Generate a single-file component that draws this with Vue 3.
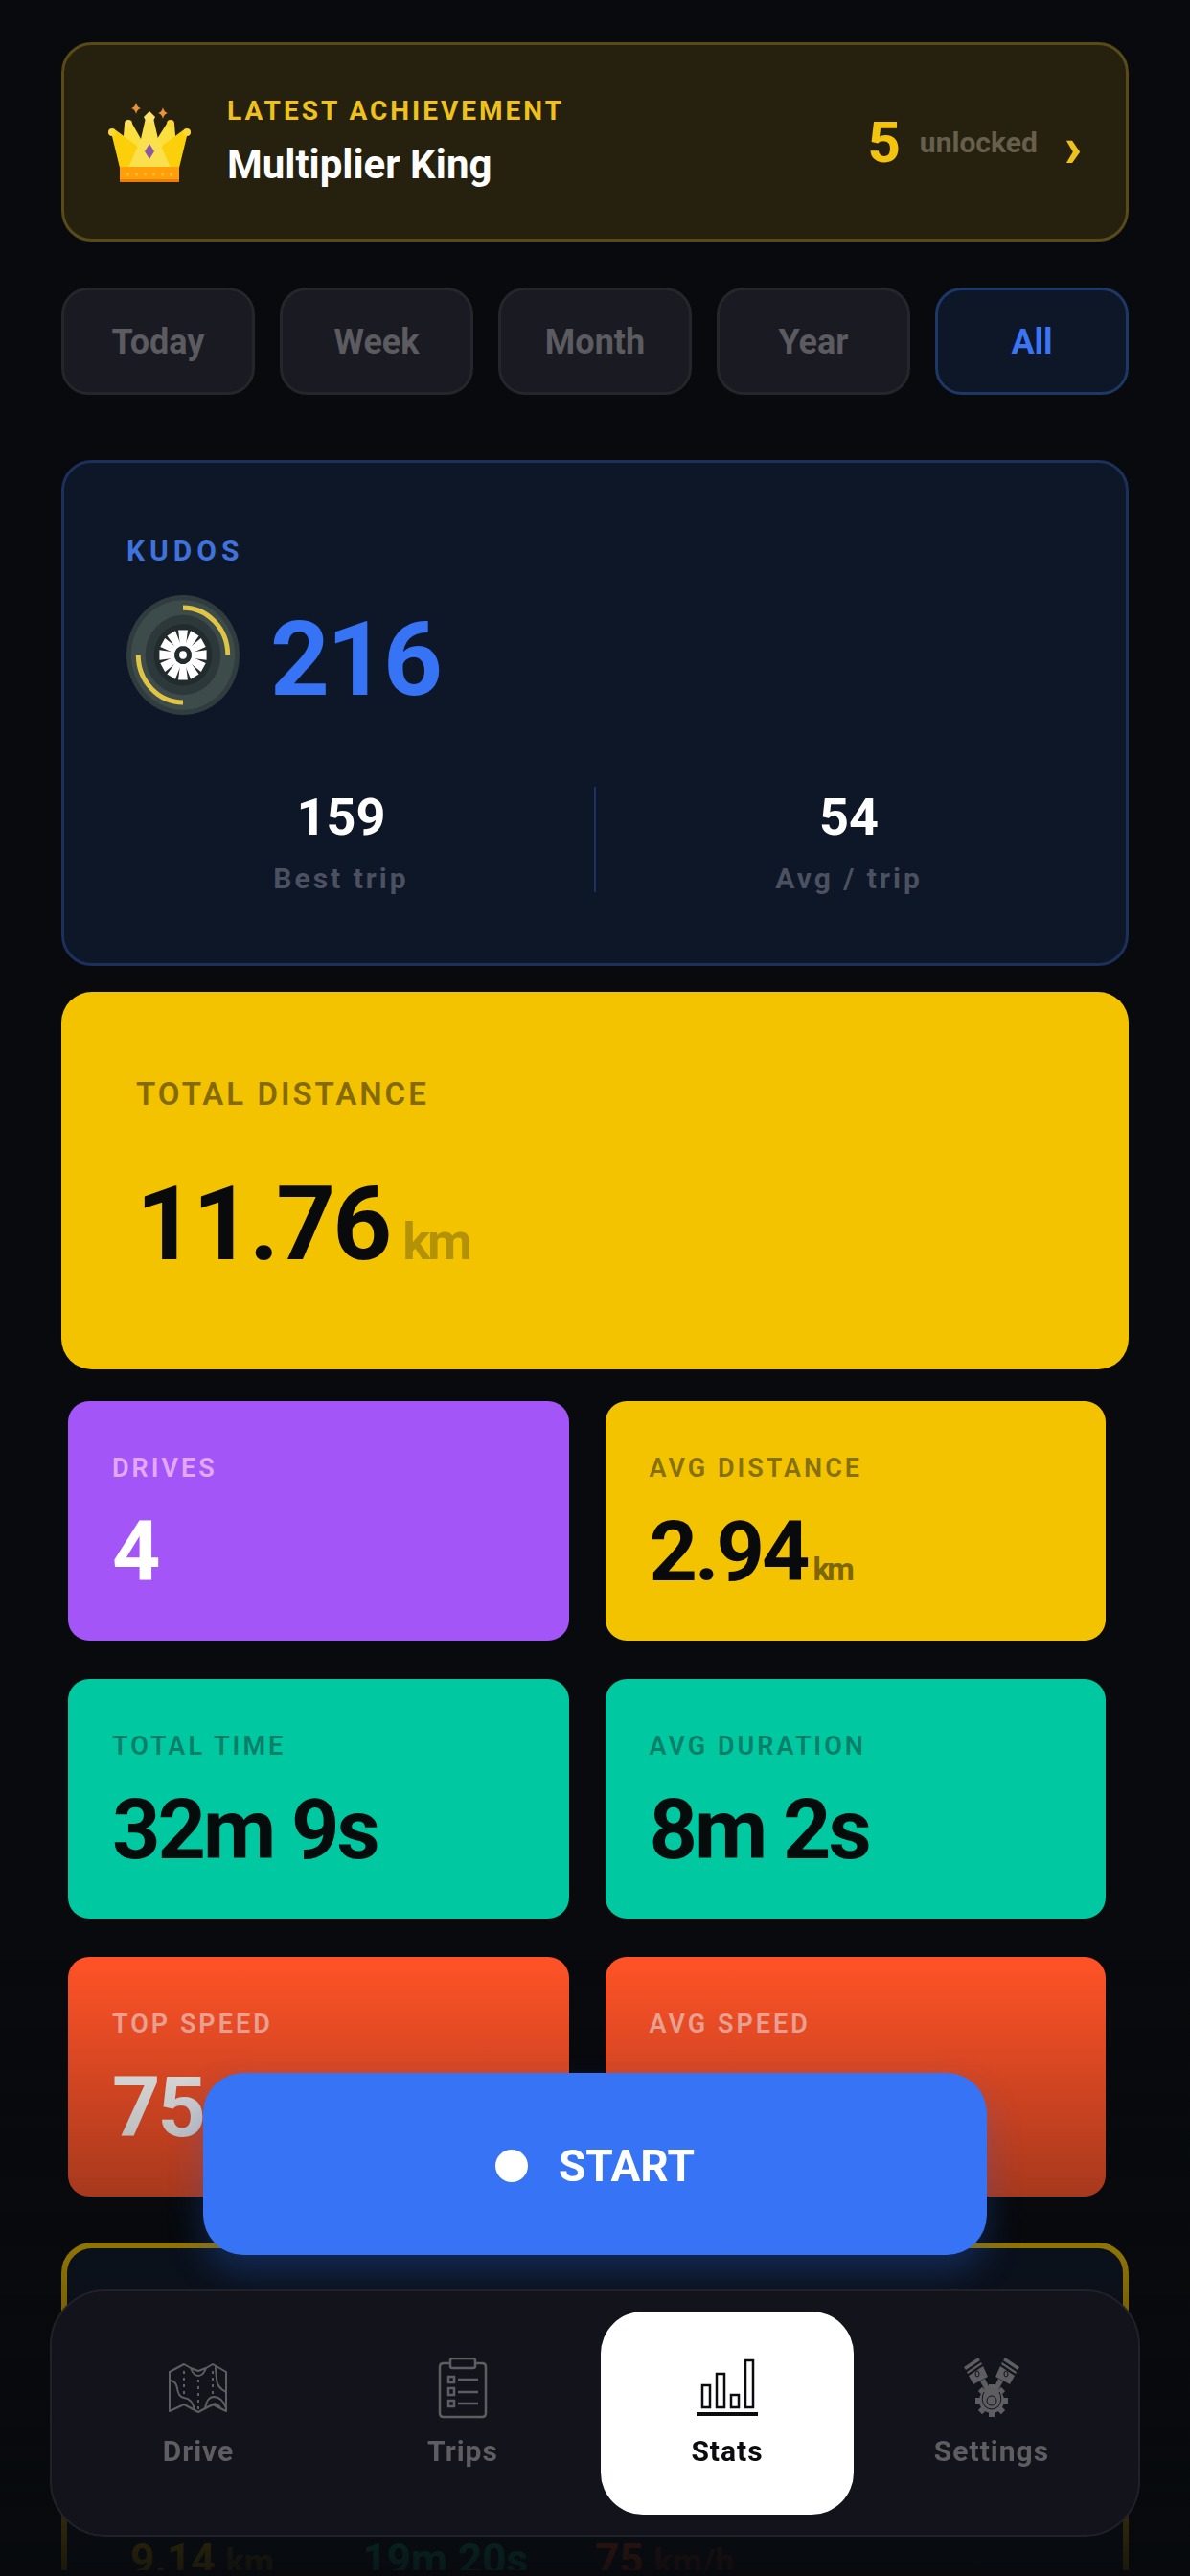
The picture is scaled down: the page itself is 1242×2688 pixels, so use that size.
<script setup>
import { ref } from 'vue'

const periods = ['Today', 'Week', 'Month', 'Year', 'All']
const period = ref('All')

const stats = [
  { label: 'DRIVES', value: '4', tone: 'purple' },
  { label: 'AVG DISTANCE', value: '2.94', unit: 'km', tone: 'yellow' },
  { label: 'TOTAL TIME', value: '32m 9s', tone: 'green' },
  { label: 'AVG DURATION', value: '8m 2s', tone: 'green' },
  { label: 'TOP SPEED', value: '75', tone: 'orange' },
  { label: 'AVG SPEED', value: '', tone: 'orange' },
]

const spokes = Array.from({ length: 12 }, (_, i) => i * 30)
const teeth = Array.from({ length: 8 }, (_, i) => i * 45)
</script>

<template>
  <div class="app">
    <main class="content">
      <a href="#achievements" class="achievement">
        <svg class="crown" viewBox="0 0 86 84" aria-hidden="true">
          <path d="M29 0q1 5 5 6q-4 1-5 6q-1-5-5-6q4-1 5-6zM57 5q1 5 5 6q-4 1-5 6q-1-5-5-6q4-1 5-6z" fill="#e8913a" />
          <path d="M17 22L25 22L34 38L51 38L61 22L69 22L72 60H14z" fill="#fbdf3c" />
          <path d="M3 31L8 29L27 43L43 58L59 43L78 29L83 31L74 68H12z" fill="#fccf0b" />
          <path d="M39 16H47L52 38L65 68H21L34 38z" fill="#fbe04e" />
          <circle cx="4" cy="31" r="4" fill="#fcd835" />
          <circle cx="82" cy="31" r="4" fill="#fcd835" />
          <circle cx="21" cy="22" r="4" fill="#fde05a" />
          <circle cx="65" cy="22" r="4" fill="#fcd835" />
          <path d="M43 9L49 15Q47 20 43 21Q39 20 37 15z" fill="#fde36a" />
          <path d="M43 43L48 51L43 59L38 51z" fill="#8a56a6" />
          <path d="M12 67H74V82H12z" fill="#ff9f0a" />
          <path d="M12 80H74V83H12z" fill="#ee7d06" />
          <path d="M19 75H70" stroke="#ffb92e" stroke-width="3" stroke-dasharray="3 6" />
        </svg>
        <span class="achievement-text">
          <span class="eyebrow">LATEST ACHIEVEMENT</span>
          <span class="achievement-name">Multiplier King</span>
        </span>
        <span class="count">5</span>
        <span class="unlocked">unlocked</span>
        <span class="chevron">›</span>
      </a>

      <div class="periods">
        <button
          v-for="p in periods"
          :key="p"
          type="button"
          class="period"
          :class="{ active: p === period }"
          :aria-pressed="p === period"
          @click="period = p"
        >{{ p }}</button>
      </div>

      <section class="kudos">
        <h2 class="kudos-label">KUDOS</h2>
        <div class="kudos-row">
          <svg class="wheel" viewBox="0 0 120 120" preserveAspectRatio="none" aria-hidden="true">
            <circle cx="60" cy="60" r="60" fill="#303c3d" />
            <circle cx="60" cy="60" r="55" fill="#3d4b4b" />
            <circle cx="60" cy="60" r="40" fill="#2c383a" />
            <circle cx="60" cy="60" r="31" fill="#222c2e" />
            <path d="M60 12.500A47.500 47.500 0 0 1 107.500 60M12.500 60A47.500 47.500 0 0 0 60 107.500" fill="none" stroke="#dfc445" stroke-width="5" />
            <path v-for="a in spokes" :key="a" d="M-5-25H5L3-9H-3z" fill="#fff" :transform="`translate(60 60) rotate(${a})`" />
            <circle cx="60" cy="60" r="8" fill="#222c2e" />
            <circle cx="60" cy="60" r="4" fill="#fff" />
          </svg>
          <span class="kudos-value">216</span>
        </div>
        <dl class="kudos-stats">
          <div class="kudos-stat">
            <dd>159</dd>
            <dt>Best trip</dt>
          </div>
          <div class="kudos-stat">
            <dd>54</dd>
            <dt>Avg / trip</dt>
          </div>
        </dl>
      </section>

      <section class="total">
        <h2 class="total-label">TOTAL DISTANCE</h2>
        <p class="total-value">11.76<span class="total-unit">km</span></p>
      </section>

      <section class="grid">
        <article v-for="s in stats" :key="s.label" class="stat" :class="s.tone">
          <h3 class="stat-label">{{ s.label }}</h3>
          <p class="stat-value">{{ s.value }}<span v-if="s.unit" class="stat-unit">{{ s.unit }}</span></p>
        </article>
      </section>

      <section class="best">
        <p class="best-item yellow-text">9.14 <span class="best-unit">km</span></p>
        <p class="best-item green-text">19m 20s</p>
        <p class="best-item orange-text">75 <span class="best-unit">km/h</span></p>
      </section>
    </main>

    <div class="fade"></div>

    <div class="dock">
      <button type="button" class="start"><span class="dot"></span>START</button>
      <nav class="nav">
        <a href="#drive" class="nav-item">
          <svg class="nav-icon" viewBox="0 0 64 64" fill="none" stroke="currentColor" stroke-width="2" stroke-linejoin="round" aria-hidden="true">
            <path d="M2 15L17 7L24 11Q27 19 32 19Q37 19 40 11L47 7L61 15V56L47 49L32 57L17 49L2 56z" />
            <path d="M24 11L32 14L40 11M3 24Q9 25 10 32Q11 41 17 42Q26 43 28 55M50 9Q50 13 51 22Q51 31 61 36M39 53Q41 41 48 41Q57 41 61 53M45 51Q49 45 55 52" />
            <path d="M17 14V40M32 23V54M47 14V40" stroke-dasharray="3 4" />
          </svg>
          <span>Drive</span>
        </a>
        <a href="#trips" class="nav-item">
          <svg class="nav-icon" viewBox="0 0 64 64" fill="none" stroke="currentColor" stroke-width="2.500" aria-hidden="true">
            <path d="M19 6H12Q8 6 8 10V58Q8 62 12 62H52Q56 62 56 58V10Q56 6 52 6H45" />
            <rect x="19" y="1" width="26" height="10" rx="2" />
            <path d="M17 20h6v6h-6zM17 32h6v7h-6zM17 45h6v6h-6z" />
            <path d="M27 23H48M27 36H48M27 48H48" />
          </svg>
          <span>Trips</span>
        </a>
        <a href="#stats" class="nav-item current" aria-current="page">
          <svg class="nav-icon" viewBox="0 0 64 64" fill="none" stroke="currentColor" stroke-width="2.500" aria-hidden="true">
            <path d="M6 29H14V52H6zM21 17H29V52H21zM36 39H44V52H36zM51 3H59V52H51z" />
            <path d="M0 59H64" stroke-width="4" />
          </svg>
          <span>Stats</span>
        </a>
        <a href="#settings" class="nav-item">
          <svg class="nav-icon" viewBox="0 0 64 64" aria-hidden="true">
            <g fill="currentColor">
              <path d="M3 10L18 0L20 3L5 13zM6 15L21 5L22 7L7 17zM8 19L23 9L28 20L13 28z" />
              <path d="M61 10L46 0L44 3L59 13zM58 15L43 5L42 7L57 17zM56 19L41 9L36 20L51 28z" />
              <path d="M20 25L25 22L32 36L28 39zM44 25L39 22L32 36L36 39z" />
              <circle cx="32" cy="31" r="3" />
              <path v-for="a in teeth" :key="a" d="M-3-17H3V-10H-3z" :transform="`translate(32 45) rotate(${a})`" />
              <circle cx="32" cy="45" r="13" />
            </g>
            <g class="cut">
              <ellipse cx="17" cy="17" rx="2" ry="3" />
              <ellipse cx="47" cy="17" rx="2" ry="3" />
              <circle cx="32" cy="45" r="5" />
              <path d="M24 36Q20 44 25 51Q32 57 39 51Q44 44 40 36" />
            </g>
          </svg>
          <span>Settings</span>
        </a>
      </nav>
    </div>
  </div>
</template>

<style>
body {
  margin: 0;
  background: #080a0d;
}
</style>

<style scoped>
.app {
  box-sizing: border-box;
  height: 100vh;
  padding-bottom: 6px;
  overflow: hidden;
  background: #080a0d;
  color: #fff;
  font-family: Roboto, "Liberation Sans", sans-serif;
  font-weight: 700;
}
.app *,
.app *::before {
  box-sizing: border-box;
}
h2, h3, p, dl, dd, dt {
  margin: 0;
  font-size: inherit;
  font-weight: inherit;
}
a {
  color: inherit;
  text-decoration: none;
}
button {
  font: inherit;
  cursor: pointer;
}
.content {
  height: 100%;
  overflow: hidden;
  padding: 44px 64px 0;
}

.achievement {
  display: flex;
  align-items: center;
  height: 208px;
  padding: 2px 46px 0;
  border: 3px solid #584b17;
  border-radius: 32px;
  background: #26210f;
}
.crown {
  width: 86px;
  height: 84px;
  margin-right: 38px;
}
.achievement-text {
  display: flex;
  flex: 1;
  flex-direction: column;
  gap: 14px;
}
.eyebrow {
  color: #eec11c;
  font-size: 28px;
  line-height: 32px;
  letter-spacing: 3px;
}
.achievement-name {
  font-size: 42px;
  line-height: 52px;
}
.count {
  margin-right: 20px;
  color: #f4c40d;
  font-size: 60px;
  line-height: 64px;
}
.unlocked {
  margin-right: 28px;
  color: #655f4c;
  font-size: 30px;
  line-height: 36px;
}
.chevron {
  padding-top: 8px;
  color: #eec11c;
  font-size: 60px;
  font-weight: 900;
  line-height: 60px;
}

.periods {
  display: grid;
  grid-template-columns: repeat(5, 1fr);
  gap: 26px;
  margin-top: 48px;
}
.period {
  height: 112px;
  padding: 2px 0 0;
  border: 3px solid #25262b;
  border-radius: 28px;
  background: #1a1a22;
  color: #5b5b60;
  font-size: 36px;
}
.period.active {
  border-color: #1d3767;
  background: #0d1728;
  color: #3b74f4;
}

.kudos {
  margin-top: 68px;
  padding: 74px 65px;
  border: 3px solid #1b315c;
  border-radius: 32px;
  background: #0e1727;
}
.kudos-label {
  color: #3f72dd;
  font-size: 30px;
  line-height: 36px;
  letter-spacing: 5px;
}
.kudos-row {
  display: flex;
  align-items: flex-end;
  gap: 32px;
  margin-top: 28px;
}
.wheel {
  width: 118px;
  height: 125px;
}
.kudos-value {
  color: #3773f5;
  font-size: 108px;
  line-height: 116px;
  letter-spacing: -3px;
}
.kudos-stats {
  display: flex;
  margin-top: 75px;
  text-align: center;
}
.kudos-stat {
  flex: 1;
}
.kudos-stat:first-child {
  padding-right: 40px;
  border-right: 2px solid #1d3260;
}
.kudos-stat:last-child {
  padding-left: 40px;
}
.kudos-stat dd {
  font-size: 54px;
  line-height: 64px;
}
.kudos-stat dt {
  margin-top: 18px;
  color: #4b5160;
  font-size: 30px;
  line-height: 28px;
  letter-spacing: 3px;
}

.total {
  margin-top: 27px;
  padding: 89px 78px 87px;
  border-radius: 32px;
  background: #f4c300;
  color: #090a0b;
}
.total-label {
  color: #846a07;
  font-size: 33px;
  line-height: 36px;
  letter-spacing: 3px;
  font-weight: 600;
}
.total-value {
  margin-top: 52px;
  font-size: 108px;
  line-height: 130px;
  letter-spacing: -3px;
}
.total-unit {
  margin-left: 14px;
  color: #b49208;
  font-size: 54px;
  line-height: 54px;
}

.grid {
  display: grid;
  grid-template-columns: repeat(2, 1fr);
  gap: 40px 38px;
  margin: 33px 24px 0 7px;
}
.stat {
  padding: 54px 46px 49px;
  border-radius: 22px;
}
.stat-label {
  font-size: 27px;
  line-height: 32px;
  letter-spacing: 3px;
  font-weight: 600;
}
.stat-value {
  min-height: 88px;
  margin-top: 27px;
  font-size: 88px;
  line-height: 88px;
  letter-spacing: -3px;
}
.stat-unit {
  margin-left: 6px;
  font-size: 33px;
  line-height: 33px;
}
.purple { background: #a455f7; }
.yellow { background: #f4c300; color: #090a0b; }
.green { background: #00c9a2; color: #060c0c; }
.orange { background: #ff5327; }
.purple .stat-label { color: #e3a9f6; }
.yellow .stat-label { color: #86700a; }
.yellow .stat-unit { color: #7d6608; }
.green .stat-label { color: #087f69; }
.orange .stat-label { color: #ffb0a0; }

.best {
  display: grid;
  grid-template-columns: repeat(4, 1fr);
  margin-top: 48px;
  padding: 297px 66px 64px;
  border: 6px solid #f4c300;
  border-radius: 32px;
  background: #0e1727;
}
.best-item {
  font-size: 44px;
  line-height: 56px;
  white-space: nowrap;
}
.best-unit {
  font-size: 36px;
  line-height: 36px;
  opacity: 0.5;
}
.yellow-text { color: #f4c300; }
.green-text { color: #00c9a2; }
.orange-text { color: #ff5327; }

.fade {
  position: fixed;
  right: 0;
  bottom: 0;
  left: 0;
  height: 644px;
  background: linear-gradient(rgba(8, 10, 13, 0), rgba(8, 10, 13, 0.37) 40%, rgba(8, 10, 13, 0.93));
  pointer-events: none;
}
.dock {
  position: fixed;
  right: 52px;
  bottom: 41px;
  left: 52px;
  display: flex;
  flex-direction: column;
  gap: 36px;
}
.start {
  display: flex;
  align-items: center;
  justify-content: center;
  gap: 32px;
  height: 190px;
  margin: 0 160px;
  padding: 3px 0 0;
  border: 0;
  border-radius: 42px;
  background: #3773f5;
  box-shadow: 0 18px 36px rgba(40, 100, 220, 0.3);
  color: #fff;
  font-size: 46px;
}
.dot {
  width: 34px;
  height: 34px;
  border-radius: 50%;
  background: #fff;
}
.nav {
  display: flex;
  gap: 12px;
  padding: 21px;
  border: 2px solid #212227;
  border-radius: 58px;
  background: #13131b;
}
.nav-item {
  display: flex;
  flex: 1;
  flex-direction: column;
  align-items: center;
  gap: 18px;
  padding: 48px 0 50px;
  border-radius: 44px;
  color: #5d5d62;
  font-size: 30px;
  line-height: 32px;
  letter-spacing: 1px;
}
.nav-item.current {
  background: #fff;
  color: #0c0c10;
}
.nav-icon {
  width: 64px;
  height: 64px;
}
.cut {
  fill: none;
  stroke: #13131b;
  stroke-width: 1;
}
</style>
